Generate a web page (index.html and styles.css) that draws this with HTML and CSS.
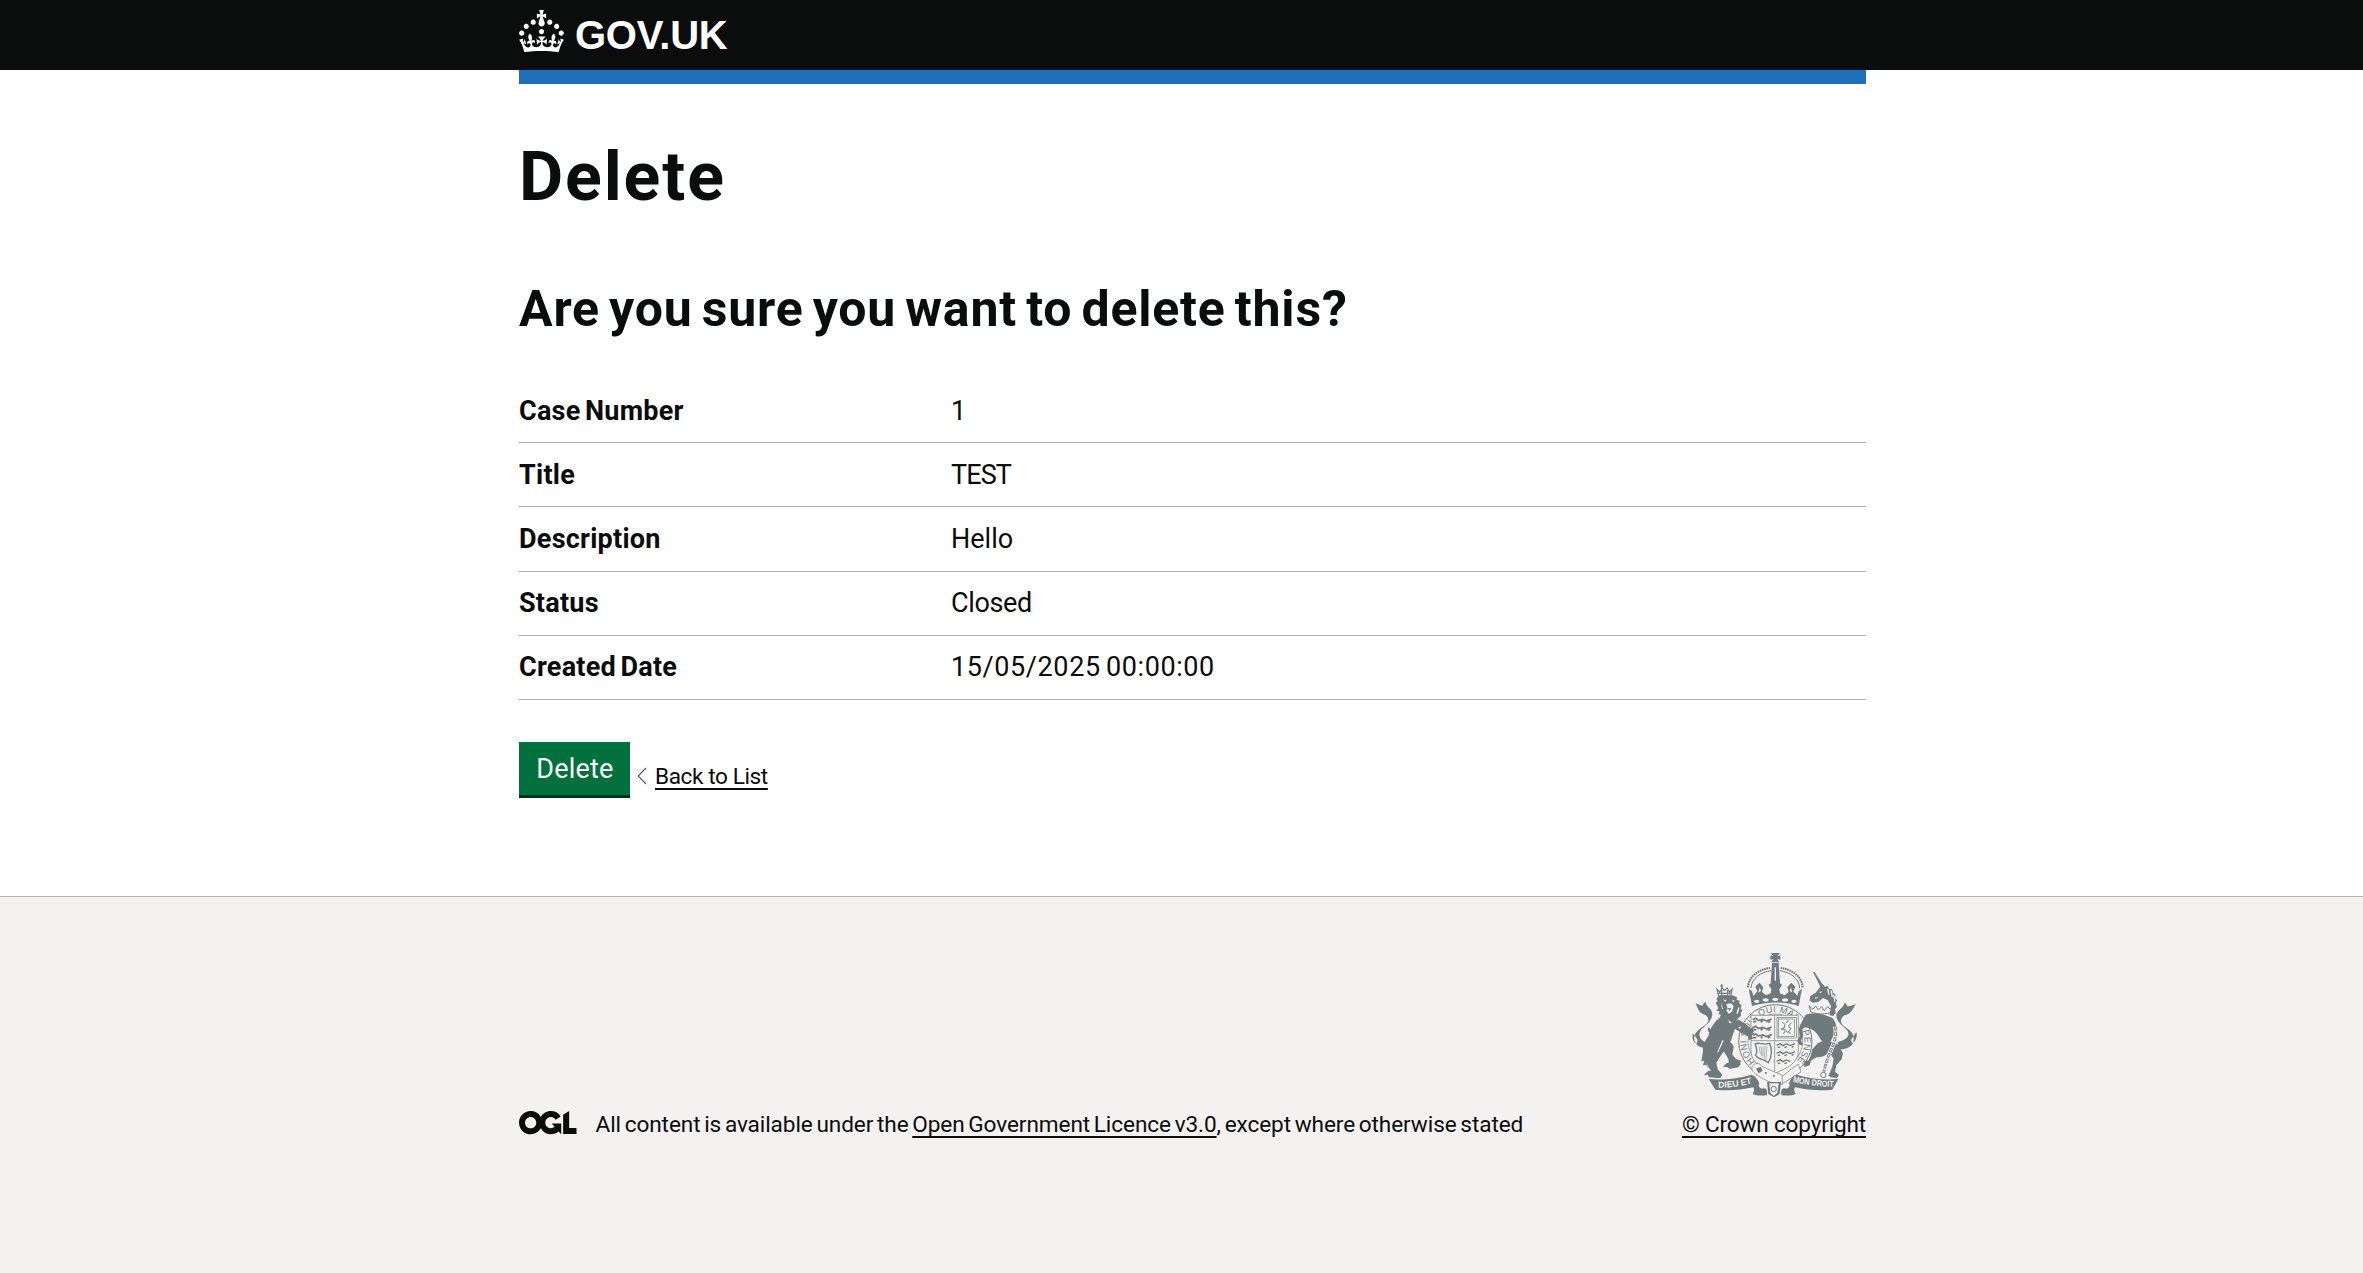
FILE: index.html
```html
<!DOCTYPE html>
<html lang="en">
<head>
<meta charset="utf-8">
<title>Delete</title>
<link rel="stylesheet" href="styles.css">
</head>
<body>
<header class="header">
  <div class="container header-inner">
    <a class="logo" href="#" aria-label="GOV.UK">
      <svg class="logo-crown" viewBox="0 0 32 30" fill="currentColor"><path fill-rule="evenodd" d="M22.6 10.4c-1 .4-2-.1-2.4-1-.4-.9.1-2 1-2.4.9-.4 2 .1 2.4 1s-.1 2-1 2.4m-5.9 6.7c-.9.4-2-.1-2.4-1-.4-.9.1-2 1-2.4.9-.4 2 .1 2.4 1s-.1 2-1 2.4m10.8-3.7c-1 .4-2-.1-2.4-1-.4-.9.1-2 1-2.4.9-.4 2 .1 2.4 1s0 2-1 2.4m3.3 4.8c-1 .4-2-.1-2.4-1-.4-.9.1-2 1-2.4.9-.4 2 .1 2.4 1s-.1 2-1 2.4M17 4.7l2.3 1.2V2.5l-2.3.7-.2-.2.9-3h-3.4l.9 3-.2.2c-.1.1-2.3-.7-2.3-.7v3.4L15 4.7c.1.1.1.2.2.2l-1.3 4c-.1.2-.1.4-.1.6 0 1.1.8 2 1.9 2.2h.7c1-.2 1.9-1.1 1.9-2.1 0-.2 0-.4-.1-.6l-1.3-4c-.1-.2 0-.2.1-.3m-7.6 5.7c.9.4 2-.1 2.4-1 .4-.9-.1-2-1-2.4-.9-.4-2 .1-2.4 1s0 2 1 2.4m-5 3c.9.4 2-.1 2.4-1 .4-.9-.1-2-1-2.4-.9-.4-2 .1-2.4 1s.1 2 1 2.4m-3.2 4.8c.9.4 2-.1 2.4-1 .4-.9-.1-2-1-2.4-.9-.4-2 .1-2.4 1s0 2 1 2.4m14.8 11c4.4 0 8.6.3 12.3.8 1.1-4.5 2.4-7 3.7-8.8l-2.5-.9c.2 1.3.3 1.9 0 2.7-.4-.4-.8-1.1-1.1-2.3l-1.2 4c.7-.5 1.3-.8 2-.9-1.1 2.5-2.6 3.1-3.5 3-1.1-.2-1.7-1.2-1.5-2.1.3-1.2 1.5-1.5 2.1-.1 1.1-2.3-.8-3-2-2.3 1.9-1.9 2.1-3.5.6-5.6-2.1 1.6-2.1 3.2-1.2 5.5-1.2-1.4-3.2-.6-2.5 1.6.9-1.4 2.1-.5 1.9.8-.2 1.1-1.7 2.1-3.5 1.9-2.7-.2-2.9-2.1-2.9-3.6.7-.1 1.9.5 2.9 1.9l.4-4.3c-1.1 1.1-2.1 1.4-3.2 1.4.4-1.2 2.1-3 2.1-3h-5.4s1.7 1.9 2.1 3c-1.1 0-2.1-.2-3.2-1.4l.4 4.3c1-1.4 2.2-2 2.9-1.9-.1 1.5-.2 3.4-2.9 3.6-1.9.2-3.4-.8-3.5-1.9-.2-1.3 1-2.2 1.9-.8.7-2.3-1.2-3-2.5-1.6.9-2.2.9-3.9-1.2-5.5-1.5 2-1.3 3.7.6 5.6-1.2-.7-3.1 0-2 2.3.6-1.4 1.8-1.1 2.1.1.2.9-.3 1.9-1.5 2.1-.9.2-2.4-.5-3.5-3 .6 0 1.2.3 2 .9l-1.2-4c-.3 1.1-.7 1.9-1.1 2.3-.3-.8-.2-1.4 0-2.7l-2.9.9C1.3 23 2.6 25.5 3.7 30c3.7-.5 7.9-.8 12.3-.8"/></svg>
      <span class="logo-text">GOV.UK</span>
    </a>
  </div>
</header>
<main class="container main">
  <h1 class="heading-xl">Delete</h1>
  <h2 class="heading-l">Are you sure you want to delete this?</h2>
  <dl class="summary">
    <div class="row"><dt>Case Number</dt><dd>1</dd></div>
    <div class="row"><dt>Title</dt><dd class="caps">TEST</dd></div>
    <div class="row"><dt>Description</dt><dd>Hello</dd></div>
    <div class="row"><dt>Status</dt><dd class="snug">Closed</dd></div>
    <div class="row"><dt>Created Date</dt><dd class="numeric">15/05/2025 00:00:00</dd></div>
  </dl>
  <div class="actions">
    <button class="button">Delete</button>
    <a class="back" href="#"><svg class="chevron" viewBox="0 0 10 18"><path d="M9 1 1.2 9 9 17" fill="none" stroke="#505a5f" stroke-width="1.1"/></svg><span class="link">Back to List</span></a>
  </div>
</main>
<footer class="footer">
  <div class="container footer-inner">
    <div class="licence">
      <svg class="ogl" viewBox="0 0 483.2 195.7" fill="currentColor"><path d="M421.5 142.8V.1l-50.7 32.3v161.1h112.4v-50.7zm-122.3-9.6A47.12 47.12 0 0 1 221 97.8c0-26 21.1-47.1 47.1-47.1 16.7 0 31.4 8.7 39.7 21.8l42.7-27.2A97.63 97.63 0 0 0 268.1 0c-36.5 0-68.3 20.1-85.1 49.7A98 98 0 0 0 97.8 0C43.9 0 0 43.9 0 97.8s43.9 97.8 97.8 97.8c36.5 0 68.3-20.1 85.1-49.7a97.76 97.76 0 0 0 149.6 25.4l19.4 22.2h3v-87.8h-80l24.3 27.5zM97.8 145c-26 0-47.1-21.1-47.1-47.1s21.1-47.1 47.1-47.1 47.1 21.1 47.1 47.1S123.8 145 97.8 145"/></svg>
      <span class="licence-text">All content is available under the <a class="link" href="#">Open Government Licence v3.0</a>, except where otherwise stated</span>
    </div>
    <a class="copyright" href="#">
      <svg class="crest" viewBox="60 30 510 445">
        <g class="ink">
          <!-- crown -->
          <path d="M305 39h28l-8 10 9-3v14l-9-4 6 11h-24l6-11-9 4V46l9 3z"/>
          <path d="M309 69h20l4 60h-28z"/>
          <path d="M239 146l10 52c45-14 95-14 140 0l10-52-10 8-4 14-12-14 6-14-12-12-12 14 4 14-12 10-14-6-2-12 8-14-20-14-20 14 8 14-2 12-14 6-12-10 4-14-12-14-12 12 6 14-12 14-4-14z"/>
        </g>
        <g class="line">
          <path d="M237 142c2-34 34-54 66-58M401 142c-2-34-34-54-66-58" stroke-width="6" stroke-dasharray="5 2"/>
          <path d="M246 144c2-30 30-48 60-52M392 144c-2-30-30-48-60-52" stroke-width="3"/>
          <circle cx="319" cy="304" r="110" stroke-width="3"/>
        </g>
        <g class="paper">
          <ellipse cx="263" cy="184" rx="8" ry="5"/><ellipse cx="290" cy="180" rx="9" ry="5"/><ellipse cx="319" cy="178" rx="9" ry="5"/><ellipse cx="348" cy="180" rx="9" ry="5"/><ellipse cx="375" cy="184" rx="8" ry="5"/>
          <path d="M317 82h4v40h-4zM272 142l4 10-8 6zM366 142l-4 10 8 6z"/>
        </g>
        <path id="garter" d="M257.500 365.500a87 87 0 1 1 123 0" fill="none"/>
        <text class="motto"><textPath href="#garter" textLength="405">HONI SOIT QUI MAL Y PENSE</textPath></text>
        <circle class="line" cx="319" cy="304" r="82" stroke-width="2"/>
        <!-- shield -->
        <path class="shield" d="M246 226h142v108c0 34-34 52-71 66-37-14-71-32-71-66z"/>
        <g class="line" stroke-width="2">
          <path d="M317 226v172M246 302h142"/>
          <rect x="324" y="232" width="58" height="62"/><rect x="329" y="237" width="48" height="52"/>
          <path stroke-width="5" d="M251 239l9-4 8 6 14-3 10 5 16-6M252 246l10-2M275 247l6-4M296 247l8-3M251 263l9-4 8 6 14-3 10 5 16-6M252 270l10-2M275 271l6-4M296 271l8-3M251 286l9-4 8 6 14-3 10 5 16-6M252 294l10-2M275 294l6-4M296 294l8-3"/>
          <path stroke-width="3" d="M340 246l8 8-3 10-9 4 12 0 8 10 10-12-8-8 10-10M350 250l8-10M344 282l4-10M364 282l-6-8"/>
          <path stroke-width="4" d="M323 316l10-5 9 6 10-5 12 5 14-6M326 323l8-2M346 323l8-3M368 322l6-3M323 340l10-5 9 6 10-5 12 5 14-6M326 347l8-2M346 347l8-3M368 346l6-3M323 364l10-5 9 6 10-5 12 5M326 371l8-2M346 371l8-3"/>
          <path stroke-width="4" d="M258 312c14-8 24 6 44-2 8 20 6 42-4 58-14-12-32-8-38-22 6-12 4-22-2-34z"/>
          <path stroke-width="1.500" d="M270 320l4 22M276 318l2 30M282 320l0 32M288 318l-2 38M294 318l-3 42"/>
        </g>
        <!-- buckle and belt -->
        <path class="shield" d="M388 372l-50 38-2 24 60-38z"/>
        <path class="shield" d="M250 378c10-12 24-8 30 2l60 26v26c-30 2-58-14-82-32-8-6-12-14-8-22z"/>
        <path class="ink" d="M261 386l14-6 6 12-12 8zM288 396h5v5h-5zM312 405h5v5h-5z"/>
        <!-- lion -->
        <g class="ink">
          <path d="M144 196l-4-8 6-4-4-8 10-10h38l14 6-1 7 9 3-2 8 8 6-3 8 5 8-5 6 1 10-8 6-6 8-22-6-28-4 4-8-8-2 4-8-10-2 6-8z"/>
          <path d="M164 224c-24 16-40 36-46 64-10 14-18 28-16 44l-4 26 12 6 10 20 12 16-2 10 24 4 6-10-14-16-4-20 14-22 22-30c12-20 14-36 20-50l18 12 20 10 4 12 12-4-4-10 8-6-20-12-28-24z"/>
          <path d="M166 302c14 0 26 6 28 20l-4 22 12 14 14 4-4 14-24 4-8-6-2-18-16-26z"/>
          <path d="M206 238l24 14 16 14 6-6 2 16-14 6-14-14-26-12z"/>
          <path d="M116 326c-26-4-38-10-40-28-4-22 22-34 36-46 10-12 6-22-4-28-14-2-20-12-28-34 10 4 16 8 22 6 0-6 4-8 8-10 0 14 20 20 20 36 0 22-24 36-34 48-10 14-6 30 22 42zM72 280c-4 14 0 26 10 32l4-12M120 260c2 12 12 4 14 18-12 0-24-4-14-18z"/>
          <path d="M106 342l-10 22 10-2-4 14 10-2 6 14M118 392l-14 14 12-2 4 8 28 2 8-8-12-14zM172 370l-10 10 14 2 8 4 24-4 8-10-14-10z"/>
        </g>
        <g class="line" stroke-width="3.500">
          <path d="M149 170l-5-22 8 8 8-12 7 8 7-8 8 12 7-8-4 22c-12-4-24-4-36 0zM158 150v18M176 150v18M147 160h40"/>
          <path d="M158 132v14M153 138h10"/>
        </g>
        <g class="paper">
          <path d="M172 192l14-2 8 8-4 16-10 8-8-10 4-6zM162 178l10 3-3 5zM190 179l9 4-8 3zM202 220l6-18 4 2-6 18zM156 186l6 20-3 2z"/>
          <path d="M176 240l14 8-8 2zM160 300l-16 38 4-2 16-34zM206 264l10-6-2 8z"/>
        </g>
        <path class="ink" d="M176 204l10 0-4 10z"/>
        <!-- unicorn -->
        <g class="ink">
          <path d="M432 96l4-1 28 43-8 6z"/>
          <path d="M424 168l16-10 14-18 6-8 8 8 8-2 4 8 10 2 2 10 8 6-2 10 6 8-4 8 4 10-6 8 2 12-8 8-10-2 4-28-10-18-14-6-14 12-16 2-10-6z"/>
          <path d="M410 224c22-8 58-2 80 10 12 12 14 28 8 44l-16 32c-14 2-24-4-30-16-10-20-26-30-44-32l-8 6 3 18-7 16 7 12-11 2-7-13 7-14-3-22 10-22z"/>
          <path d="M446 310c16-10 34-8 52-2l12 10 12 22-4 18-16 18-4 20 4 8-10 8-14-4 12-28 4-24-14-20c-10 12-24 16-38 16l-16 10-4 14-18 6 12-16 8-16 6-22z"/>
          <path d="M506 330c26-4 48-6 48-32 2-22-18-30-32-42-12-12-4-24 4-30 14-2 24-12 34-34-10 4-18 8-26 6 0-6-4-8-8-10 0 14-22 22-24 38 0 20 22 34 32 44 10 14 4 28-28 36zM562 276c4 14-2 28-12 34l-4-10M504 262c-2 10-14 4-16 14 14 2 22-4 16-14z"/>
          <path d="M404 378l14-6 6-12-18 4zM484 402l14-6 12 8-6 10-20-2z"/>
        </g>
        <path class="paper" d="M450 156l9-2-4 6zM484 150l4 22 4 0-3-20zM474 146l4 18 4 0-3-17zM492 164l4 22 3 0-2-20zM438 172l12 1-12 3z"/>
        <path class="line" stroke-width="3" d="M420 196l6 20c22 8 44 8 64 0l4-20M422 200l10 8 8-10 8 12 10-10 8 12 10-12 8 8 8-10"/>
        <path d="M498 258c8 30-6 60-18 86-8 22-12 38-16 60" fill="none" stroke="#f3f2f1" stroke-width="13"/>
        <path class="line" stroke-width="8" stroke-dasharray="13 4" d="M498 258c8 30-6 60-18 86-8 22-12 38-16 52"/>
        <path stroke="#f3f2f1" fill="none" stroke-width="3" stroke-dasharray="8 9" stroke-dashoffset="-2.500" d="M498 258c8 30-6 60-18 86-8 22-12 38-16 52"/>
        <circle class="line" cx="463" cy="405" r="8" stroke-width="3"/>
        <!-- scroll -->
        <g class="ink">
          <path d="M119 417c44 4 92-2 128-13 12 4 20 14 24 28-4 2-2 14 10 14 12-4 16 8 12 20-20 2-34 0-42-4 4-6 6-14 2-20-38 8-76 12-114 7z"/>
          <path d="M508 417c-44 4-88-2-126-13-12 4-18 14-22 28 4 2 2 14-10 14-12-4-16 8-12 20 20 2 34 0 42-4-4-6-6-14-2-20 38 8 74 12 112 7z"/>
          <path d="M294 426h42l-4 36-17 10-17-10z"/>
        </g>
        <path class="paper" d="M301 430h28l-4 28-11 10-10-10z"/>
        <circle class="line" cx="314" cy="447" r="8" stroke-width="3"/>
        <path id="scrollLeft" d="M148 443q50 0 102-13" fill="none"/>
        <path id="scrollRight" d="M371 426q60 14 126 15" fill="none"/>
        <text class="scroll-text"><textPath href="#scrollLeft" textLength="102" lengthAdjust="spacingAndGlyphs">DIEU ET</textPath></text>
        <text class="scroll-text"><textPath href="#scrollRight" textLength="124" lengthAdjust="spacingAndGlyphs">MON DROIT</textPath></text>
      </svg>
      <span class="link">© Crown copyright</span>
    </a>
  </div>
</footer>
</body>
</html>
```
FILE: styles.css
```css
* { box-sizing: border-box; }
body { margin: 0; font-family: Roboto, sans-serif; color: #0b0c0c; background: #fff; }
a { color: inherit; text-decoration: none; }
.container { width: 1347px; margin: 0 auto 0 519px; }

.header { background: #0b0c0c; color: #fff; height: 70px; }
.header-inner { height: 84px; border-bottom: 14px solid #1d70b8; padding-top: 10px; }
.logo { display: flex; gap: 11px; height: 42px; }
.logo-crown { width: 45px; height: 42px; }
.logo-text { font: bold 40px/51px "Liberation Sans", sans-serif; letter-spacing: -.3px; }

.main { height: 826px; padding-top: 72px; }
.heading-xl { margin: 0; font-size: 68px; line-height: 70px; letter-spacing: 1.9px; }
.heading-l { margin: 71px 0 43px; font-size: 50px; line-height: 53px; letter-spacing: .8px; word-spacing: -4px; }

.summary { margin: 0; font-size: 27px; }
.row { display: grid; grid-template-columns: 432px 1fr; height: 64.2px; border-bottom: 1px solid #b1b4b6; line-height: 35px; padding-top: 14.5px; }
dt { font-weight: 700; letter-spacing: .25px; word-spacing: -2.5px; }
dd { margin: 0; }
.caps { letter-spacing: -.9px; }
.snug { letter-spacing: -.35px; }
.numeric { letter-spacing: .6px; word-spacing: -2px; }

.actions { display: flex; gap: 7px; margin-top: 42px; }
.button { width: 111px; height: 53px; padding: 1px 0 0 1px; border: 0; background: #00703c; box-shadow: 0 3px 0 #002d18; color: #fff; font: 27px/52px Roboto, sans-serif; letter-spacing: .2px; }
.back { display: flex; gap: 8px; align-items: flex-start; padding-top: 21px; font-size: 22.6px; line-height: 28px; letter-spacing: -.4px; }
.chevron { width: 10px; height: 18px; margin-top: 4px; }
.link { text-decoration: underline; text-decoration-thickness: 2px; text-underline-offset: 4px; text-decoration-skip-ink: none; }

.footer { background: #f3f2f1; border-top: 1px solid #b1b4b6; height: 377px; padding-top: 53px; font-size: 22.6px; line-height: 28px; }
.footer-inner { display: flex; justify-content: space-between; align-items: flex-end; }
.licence { display: flex; gap: 19px; }
.licence-text { letter-spacing: -.09px; word-spacing: -1.8px; }
.ogl { width: 57.5px; height: 23.3px; }
.copyright { display: flex; flex-direction: column; align-items: center; gap: 13px; letter-spacing: -.18px; }

.crest { width: 170px; height: 148.3px; }
.ink { fill: #6f7a7c; }
.line { fill: none; stroke: #6f7a7c; }
.paper { fill: #f3f2f1; }
.shield { fill: #f3f2f1; stroke: #6f7a7c; stroke-width: 2; }
.motto { font: 27px "Liberation Sans", sans-serif; fill: #6f7a7c; }
.scroll-text { font: bold 26px "Liberation Sans", sans-serif; fill: #f3f2f1; }
```
